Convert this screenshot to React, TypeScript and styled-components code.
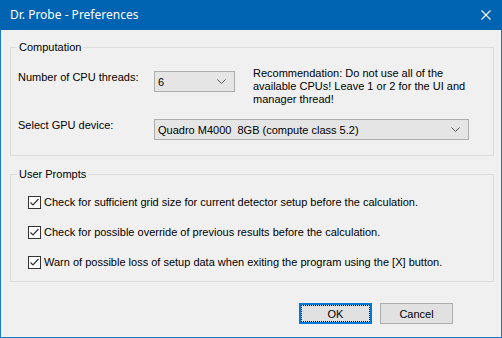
import React from "react";
import styled, { createGlobalStyle } from "styled-components";

const GlobalStyle = createGlobalStyle`
  html, body {
    margin: 0;
    padding: 0;
    background: #f0f0f0;
  }
  body {
    font-family: "Liberation Sans", Arial, sans-serif;
    font-size: 11px;
    color: #000;
  }
`;

const Window = styled.div`
  width: 502px;
  height: 338px;
  box-sizing: border-box;
  border: 1px solid #1a78c8;
  border-top: none;
  background: #f0f0f0;
  display: flex;
  flex-direction: column;
`;

const TitleBar = styled.div`
  height: 30px;
  margin: 0 -1px;
  background: #0063b1;
  color: #fff;
  display: flex;
  align-items: center;
  justify-content: space-between;
  padding: 0 11px 0 10px;
  font-family: "Noto Sans", "Open Sans", sans-serif;
  font-size: 12px;
  flex-shrink: 0;
`;

const Title = styled.span`
  line-height: 16px;
`;

const Client = styled.div`
  display: flex;
  flex-direction: column;
  padding: 11px 0 0 9px;
`;

const Group = styled.fieldset<{ $gap?: number }>`
  width: 484px;
  box-sizing: border-box;
  margin: 0 0 ${(p) => p.$gap ?? 0}px 0;
  border: 1px solid #dcdcdc;
  padding: 0;
  min-width: 0;
`;

const Legend = styled.legend`
  margin-left: 6px;
  padding: 0 2px;
  line-height: 13px;
  font-size: 11px;
`;

const SettingsGrid = styled.div`
  display: grid;
  grid-template-columns: 136px auto 1fr;
  row-gap: 13px;
  align-items: start;
  padding: 13px 0 15px 7px;
`;

const FieldLabel = styled.label<{ $top?: number }>`
  line-height: 13px;
  margin-top: ${(p) => p.$top ?? 0}px;
  white-space: nowrap;
`;

const Combo = styled.div<{ $width: number; $top?: number }>`
  width: ${(p) => p.$width}px;
  height: 21px;
  box-sizing: border-box;
  margin-top: ${(p) => p.$top ?? 0}px;
  border: 1px solid #adadad;
  background: #e5e5e5;
  display: flex;
  align-items: center;
  justify-content: space-between;
  padding: 0 8px 0 3px;
  white-space: pre;
`;

const Hint = styled.div`
  line-height: 13px;
  margin-left: 18px;
  white-space: nowrap;
`;

const WideCell = styled.div`
  grid-column: 2 / span 2;
`;

const PromptList = styled.div`
  display: flex;
  flex-direction: column;
  gap: 17px;
  padding: 15px 0 12px 17px;
`;

const PromptRow = styled.label`
  display: flex;
  align-items: center;
  gap: 3px;
  line-height: 13px;
  white-space: nowrap;
`;

const Box = styled.span`
  width: 13px;
  height: 13px;
  box-sizing: border-box;
  border: 1px solid #333;
  background: #fff;
  display: flex;
  align-items: center;
  justify-content: center;
  flex-shrink: 0;
`;

const ButtonRow = styled.div`
  display: flex;
  justify-content: flex-end;
  gap: 8px;
  margin-top: 21px;
  padding-right: 48px;
`;

const Button = styled.button<{ $default?: boolean }>`
  width: 73px;
  height: 21px;
  box-sizing: border-box;
  font-family: "Liberation Sans", Arial, sans-serif;
  font-size: 11px;
  color: #000;
  background: #e1e1e1;
  border: ${(p) => (p.$default ? "2px solid #0078d7" : "1px solid #adadad")};
  outline: ${(p) => (p.$default ? "1px dotted #000" : "none")};
  outline-offset: -3px;
  padding: 0;
`;

function Chevron() {
  return (
    <svg width="9" height="5" viewBox="0 0 9 5">
      <path d="M0.5 0.5 L4.5 4.5 L8.5 0.5" fill="none" stroke="#555" strokeWidth="1" />
    </svg>
  );
}

function CloseIcon() {
  return (
    <svg width="10" height="10" viewBox="0 0 10 10">
      <path d="M0.5 0.5 L9.5 9.5 M9.5 0.5 L0.5 9.5" stroke="#fff" strokeWidth="1.1" />
    </svg>
  );
}

function CheckBox() {
  return (
    <Box>
      <svg width="11" height="11" viewBox="0 0 11 11">
        <path d="M1.5 5.5 L4 8 L9.5 2" fill="none" stroke="#333" strokeWidth="1.2" />
      </svg>
    </Box>
  );
}

const prompts = [
  "Check for sufficient grid size for current detector setup before the calculation.",
  "Check for possible override of previous results before the calculation.",
  "Warn of possible loss of setup data when exiting the program using the [X] button.",
];

export default function App() {
  return (
    <>
      <GlobalStyle />
      <Window>
        <TitleBar>
          <Title>Dr. Probe - Preferences</Title>
          <CloseIcon />
        </TitleBar>
        <Client>
          <Group $gap={12}>
            <Legend>Computation</Legend>
            <SettingsGrid>
              <FieldLabel $top={4}>Number of CPU threads:</FieldLabel>
              <Combo $width={81} $top={4}>
                <span>6</span>
                <Chevron />
              </Combo>
              <Hint>
                Recommendation: Do not use all of the
                <br />
                available CPUs! Leave 1 or 2 for the UI and
                <br />
                manager thread!
              </Hint>
              <FieldLabel>Select GPU device:</FieldLabel>
              <WideCell>
                <Combo $width={315}>
                  <span>Quadro M4000  8GB (compute class 5.2)</span>
                  <Chevron />
                </Combo>
              </WideCell>
            </SettingsGrid>
          </Group>
          <Group>
            <Legend>User Prompts</Legend>
            <PromptList>
              {prompts.map((text) => (
                <PromptRow key={text}>
                  <CheckBox />
                  <span>{text}</span>
                </PromptRow>
              ))}
            </PromptList>
          </Group>
          <ButtonRow>
            <Button $default>OK</Button>
            <Button>Cancel</Button>
          </ButtonRow>
        </Client>
      </Window>
    </>
  );
}
